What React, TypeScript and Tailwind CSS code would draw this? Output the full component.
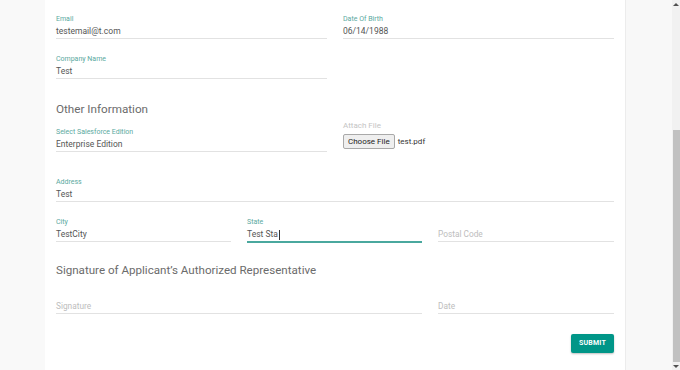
import React from "react";

const font = { fontFamily: "Roboto, 'Noto Sans', sans-serif" };

function Field({
  label,
  value,
  placeholder,
  active,
  caret,
}: {
  label?: string;
  value?: string;
  placeholder?: string;
  active?: boolean;
  caret?: boolean;
}) {
  return (
    <div className="flex flex-col">
      <div className="h-[10px] text-[7px] leading-[9px] text-[#5aa9a0]">{label ?? ""}</div>
      <div
        className={
          "h-[13px] leading-[13px] flex items-center " +
          (value ? "text-[8.5px] text-[#555555]" : "text-[8.3px] text-[#bdbdbd]")
        }
      >
        {value ?? placeholder}
        {caret ? <span className="inline-block w-px h-[10px] bg-[#333] ml-px" /> : null}
      </div>
      {active ? (
        <div className="h-[2px] bg-[#4aa89e]" />
      ) : (
        <div className="h-px bg-[#e2e2e2]" />
      )}
    </div>
  );
}

export default function App() {
  return (
    <div className="w-[680px] h-[370px] flex bg-[#f8f8f8] overflow-hidden" style={font}>
      <div className="w-[45px] shrink-0 bg-[#f9f9f9]" />
      <div className="w-[581px] shrink-0 bg-white border-r border-[#ececec] pl-[11px] pr-[11px] pt-[15px]">
        <div className="grid grid-cols-2 gap-x-[16px]">
          <Field label="Email" value="testemail@t.com" />
          <Field label="Date Of Birth" value="06/14/1988" />
        </div>
        <div className="grid grid-cols-2 gap-x-[16px] mt-[16px]">
          <Field label="Company Name" value="Test" />
          <div />
        </div>
        <div className="mt-[22px] h-[16px] text-[11.7px] leading-[16px] text-[#6b6b6b]">Other Information</div>
        <div className="grid grid-cols-2 gap-x-[16px] mt-[4px]">
          <div className="pt-[7px]">
            <Field label="Select Salesforce Edition" value="Enterprise Edition" />
          </div>
          <div className="flex flex-col">
            <div className="h-[10px] text-[8px] leading-[10px] text-[#c4c4c4]">Attach File</div>
            <div className="mt-[3px] flex items-center">
              <div className="h-[15px] px-[4px] flex items-center bg-[#efefef] border border-[#a9a9a9] rounded-[2px] text-[8px] text-[#222]">
                Choose File
              </div>
              <span className="ml-[3px] text-[8px] text-[#333]">test.pdf</span>
            </div>
          </div>
        </div>
        <div className="mt-[26px]">
          <Field label="Address" value="Test" />
        </div>
        <div className="grid grid-cols-[175px_175px_176px] gap-x-[16px] mt-[16px]">
          <Field label="City" value="TestCity" />
          <Field label="State" value="Test Sta" active caret />
          <Field placeholder="Postal Code" />
        </div>
        <div className="mt-[19px] h-[16px] text-[11.6px] leading-[16px] text-[#6b6b6b]">
          Signature of Applicant’s Authorized Representative
        </div>
        <div className="grid grid-cols-[366px_176px] gap-x-[16px] mt-[12px]">
          <Field placeholder="Signature" />
          <Field placeholder="Date" />
        </div>
        <div className="flex justify-end mt-[20px]">
          <div className="w-[43px] h-[19px] bg-[#009688] rounded-[2px] shadow-[0_1px_2px_rgba(0,0,0,0.25)] flex items-center justify-center text-white text-[7px] font-bold tracking-[0.2px]">
            SUBMIT
          </div>
        </div>
      </div>
      <div className="flex-1 bg-[#f8f8f8]" />
      <div className="w-[8px] shrink-0 bg-[#f1f1f1] flex flex-col items-center">
        <div className="h-[8px] flex items-center justify-center">
          <div className="w-0 h-0 border-l-[3px] border-r-[3px] border-b-[3px] border-l-transparent border-r-transparent border-b-[#505050]" />
        </div>
        <div className="mt-[122px] w-[7px] h-[232px] bg-[#c1c1c1]" />
        <div className="flex-1" />
        <div className="h-[8px] flex items-center justify-center">
          <div className="w-0 h-0 border-l-[3px] border-r-[3px] border-t-[3px] border-l-transparent border-r-transparent border-t-[#505050]" />
        </div>
      </div>
    </div>
  );
}
